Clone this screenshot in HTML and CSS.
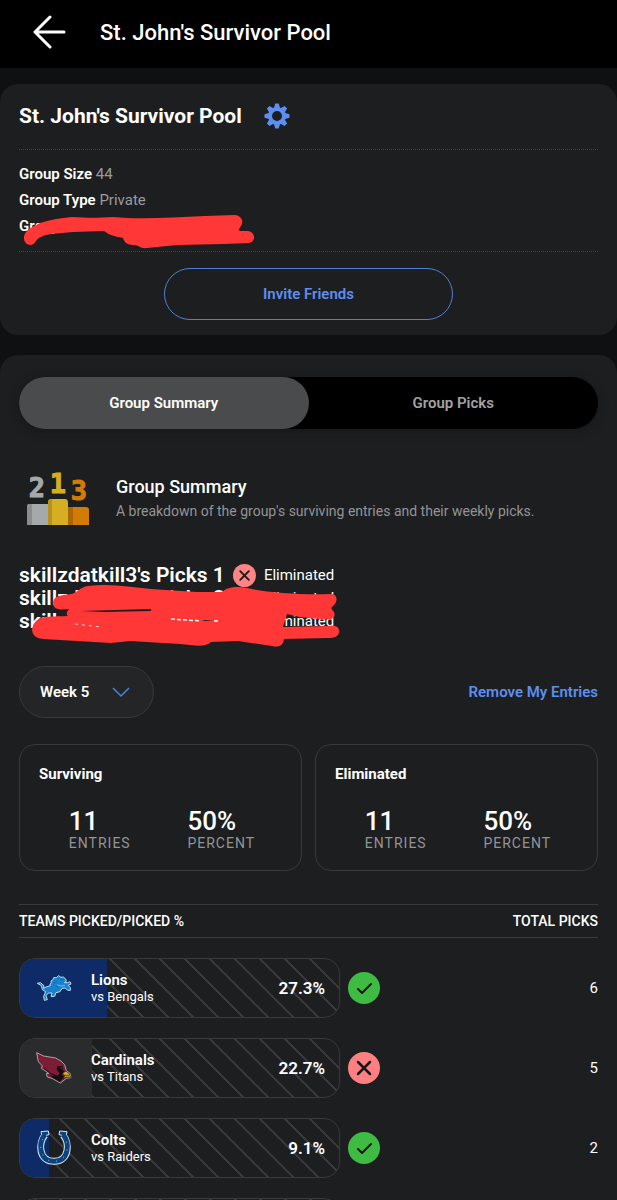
FILE: index.html
```
<!DOCTYPE html>
<html lang="en">
<head>
    <meta charset="UTF-8">
    <meta name="viewport" content="width=device-width, initial-scale=1.0">
    <title>St. John's Survivor Pool</title>
    <link rel="stylesheet" href="styles.css">
</head>
<body>
    <header class="topbar">
        <button class="back" aria-label="Back">
            <svg width="34" height="34" viewBox="0 0 34 34" fill="none" stroke="#fff" stroke-width="3" stroke-linecap="round" stroke-linejoin="round">
                <path d="M17 2 L2 17 L17 32 M2 17 H31"/>
            </svg>
        </button>
        <h1 class="topbar-title">St. John's Survivor Pool</h1>
    </header>

    <main class="content">
        <section class="card">
            <div class="group-head">
                <h2 class="group-name">St. John's Survivor Pool</h2>
                <button class="settings" aria-label="Settings">
                    <svg width="26" height="26" viewBox="-13 -13 26 26">
                        <circle r="7" fill="none" stroke="#5b8ff0" stroke-width="4"/>
                        <g fill="#5b8ff0">
                            <path id="tooth" d="M-3 -8 L-1.8 -12.5 H1.8 L3 -8 Z"/>
                            <use href="#tooth" transform="rotate(45)"/>
                            <use href="#tooth" transform="rotate(90)"/>
                            <use href="#tooth" transform="rotate(135)"/>
                            <use href="#tooth" transform="rotate(180)"/>
                            <use href="#tooth" transform="rotate(225)"/>
                            <use href="#tooth" transform="rotate(270)"/>
                            <use href="#tooth" transform="rotate(315)"/>
                        </g>
                    </svg>
                </button>
            </div>
            <div class="group-info">
                <p><strong>Group Size</strong> 44</p>
                <p><strong>Group Type</strong> Private</p>
                <p><strong>Group Password</strong></p>
                <svg class="scribble scribble-info" width="236" height="36" viewBox="20 213 236 36" fill="#ff3737">
                    <path d="M24 239 C23 231 32 227 40 223 C49 220 60 218 72 217 C88 218 98 218 113 217 C143 220 173 217 205 216 L234 215 C242 215 244 222 241 226 C239 229 238 230 240 231 L248 231 C256 232 256 242 249 243 L224 244 L177 245 L147 248 C140 249 140 245 133 245 C126 245 124 241 123 238 C114 236 109 235 104 231 L73 232 L51 234 C44 235 39 237 36 241 C33 247 25 246 24 239 Z"/>
                </svg>
            </div>
            <div class="invite-row">
                <button class="invite">Invite Friends</button>
            </div>
        </section>

        <section class="card card-summary">
            <div class="tabs" role="tablist">
                <button class="tab tab-active" role="tab" aria-selected="true">Group Summary</button>
                <button class="tab" role="tab" aria-selected="false">Group Picks</button>
            </div>

            <div class="summary">
                <svg width="62" height="62" viewBox="0 -4 62 62" class="podium">
                    <path d="M0 53 V34 Q0 32 3 32 H21 V53 Z" fill="#a6a9ac"/>
                    <path d="M0 53 V34 Q0 32 3 32 H5 V53 Z" fill="#8b8e91"/>
                    <path d="M41 53 V35 H59 Q62 35 62 38 V53 Z" fill="#d27b08"/>
                    <path d="M41 35 H46 V53 H41 Z" fill="#ae6509"/>
                    <path d="M21 53 V31 Q21 27 24 27 H38 Q41 27 41 31 V53 Z" fill="#d6ae22"/>
                    <path d="M21 53 V31 Q21 27 24 27 H25 V53 Z" fill="#b8921d"/>
                    <g class="podium-digits" text-anchor="middle">
                        <text x="10" y="25" fill="#a6a9ac" stroke="#a6a9ac">2</text>
                        <text x="31" y="21" fill="#d6ae22" stroke="#d6ae22">1</text>
                        <text x="52" y="28" fill="#d27b08" stroke="#d27b08">3</text>
                    </g>
                </svg>
                <div>
                    <h3 class="summary-title">Group Summary</h3>
                    <p class="summary-text">A breakdown of the group's surviving entries and their weekly picks.</p>
                </div>
            </div>

            <div class="entries">
                <p class="entry">
                    <strong>skillzdatkill3's Picks 1</strong>
                    <svg width="23" height="23" viewBox="0 0 32 32">
                        <circle cx="16" cy="16" r="16" fill="#ff8585"/>
                        <path d="M10 10 L22 22 M22 10 L10 22" stroke="#16171a" stroke-width="2.5" stroke-linecap="round"/>
                    </svg>
                    <span>Eliminated</span>
                </p>
                <p class="entry">
                    <strong>skillzdatkill3's Picks 2</strong>
                    <svg width="23" height="23" viewBox="0 0 32 32"></svg>
                    <span>Eliminated</span>
                </p>
                <p class="entry">
                    <strong>skillzdatkill3's Picks 3</strong>
                    <svg width="23" height="23" viewBox="0 0 32 32"></svg>
                    <span>Eliminated</span>
                </p>
                <svg class="scribble scribble-entries" width="312" height="66" viewBox="30 584 312 66">
                    <path fill="#ff3737" d="M53 604 C53 597 61 596 72 595 C78 593 80 588 88 587 C110 584 130 588 151 590 L196 593 L222 593 C228 587 240 587 252 590 C270 594 305 596 331 595 C338 595 338 603 333 607 C328 611 337 611 334 618 C331 622 325 620 318 620 L300 618 L287 615 L283 628 L329 627 C336 626 340 628 339 634 C337 639 332 639 327 639 L284 640 C283 646 280 649 272 647 L238 642 L211 643 C205 649 193 646 180 645 L130 642 L111 644 L43 640 C30 639 30 628 36 622 C42 616 54 618 68 617 C65 614 68 612 69 610 C61 611 53 611 53 604 Z"/>
                    <path fill="#1d1e20" d="M80 612 L151 610 L151 612 L105 613 Z M202 621 L214 621 L205 622 Z"/>
                    <path fill="none" stroke="#fff" stroke-width="1.5" stroke-dasharray="4 2" d="M171 620 L201 622 M214 622 H219"/>
                    <path fill="none" stroke="#ffd5d5" stroke-width="1" stroke-dasharray="3 4" d="M75 625 L101 628"/>
                </svg>
            </div>

            <div class="actions">
                <div class="week">
                    <select class="week-select" aria-label="Week">
                        <option>Week 5</option>
                    </select>
                    <svg class="week-arrow" width="18" height="12" viewBox="0 0 18 12" fill="none" stroke="#4f80e0" stroke-width="1.5">
                        <path d="M1 2 L9 10 L17 2"/>
                    </svg>
                </div>
                <a href="#" class="remove">Remove My Entries</a>
            </div>

            <div class="stats">
                <div class="stat">
                    <h4>Surviving</h4>
                    <dl>
                        <div><dd>11</dd><dt>ENTRIES</dt></div>
                        <div><dd>50%</dd><dt>PERCENT</dt></div>
                    </dl>
                </div>
                <div class="stat">
                    <h4>Eliminated</h4>
                    <dl>
                        <div><dd>11</dd><dt>ENTRIES</dt></div>
                        <div><dd>50%</dd><dt>PERCENT</dt></div>
                    </dl>
                </div>
            </div>

            <table class="picks">
                <thead>
                    <tr>
                        <th>TEAMS PICKED/PICKED %</th>
                        <th class="total">TOTAL PICKS</th>
                    </tr>
                </thead>
                <tbody>
                    <tr>
                        <td>
                            <div class="pick">
                                <div class="bar">
                                    <div class="fill fill-blue" style="width: 27.3%"></div>
                                    <svg class="logo" width="36" height="36" viewBox="78 62 108 108">
                                        <path fill="#1682cf" stroke="#c3dcee" stroke-width="3" stroke-linejoin="round" d="M82 102 L91 100 L102 109 L100 117 L111 112 L121 109 L120 104 L124 101 L123 95 L129 91 L131 85 L139 85 L146 79 L153 84 L160 83 L167 89 L169 96 L163 100 L173 100 L180 97 L183 104 L174 108 L181 115 L181 123 L173 123 L166 116 L156 117 L150 127 L138 130 L134 141 L123 142 L126 131 L115 131 L108 139 L112 151 L103 153 L101 141 L107 127 L97 121 L94 109 Z"/>
                                        <path fill="none" stroke="#a8d4f1" stroke-width="2" d="M142 106 L152 110 L165 108"/>
                                        <path fill="none" stroke="#1b5d9c" stroke-width="2" d="M150 89 L160 91 M139 111 L147 116 M130 100 L140 98"/>
                                    </svg>
                                    <div class="team"><b>Lions</b><span>vs Bengals</span></div>
                                    <span class="pct">27.3%</span>
                                </div>
                                <svg width="32" height="32" viewBox="0 0 32 32" role="img" aria-label="Won">
                                    <circle cx="16" cy="16" r="16" fill="#3fba43"/>
                                    <path d="M10 17 L14 21 L23 12" fill="none" stroke="#16171a" stroke-width="2" stroke-linecap="round" stroke-linejoin="round"/>
                                </svg>
                            </div>
                        </td>
                        <td class="total">6</td>
                    </tr>
                    <tr>
                        <td>
                            <div class="pick">
                                <div class="bar">
                                    <div class="fill fill-gray" style="width: 22.7%"></div>
                                    <svg class="logo" width="36" height="36" viewBox="78 62 108 108">
                                        <path fill="#7d1c36" stroke="#a9a6a8" stroke-width="3" stroke-linejoin="round" d="M80 70 L101 80 L137 86 L153 95 L164 106 L169 124 L180 132 L183 145 L169 147 L151 161 L128 148 L112 143 L109 133 L117 132 L94 117 L97 110 L85 97 Z"/>
                                        <path fill="none" stroke="#17090e" stroke-width="3" d="M101 117 L124 134 L149 143"/>
                                        <path fill="#101012" d="M142 111 L158 110 L158 122 L165 127 L155 136 L163 142 L149 158 L130 147 L120 139 L144 139 L149 131 L140 121 Z"/>
                                        <path fill="#7d1c36" d="M149 115 L157 113 L154 120 Z"/>
                                        <path fill="#d8a832" stroke="#3b2914" stroke-width="2" d="M158 132 L168 125 L178 133 L182 145 L169 143 L161 147 L164 139 Z"/>
                                        <path stroke="#3b2914" stroke-width="2" d="M162 138 L177 138"/>
                                    </svg>
                                    <div class="team"><b>Cardinals</b><span>vs Titans</span></div>
                                    <span class="pct">22.7%</span>
                                </div>
                                <svg width="32" height="32" viewBox="0 0 32 32" role="img" aria-label="Lost">
                                    <circle cx="16" cy="16" r="16" fill="#ff8080"/>
                                    <path d="M10 10 L22 22 M22 10 L10 22" stroke="#16171a" stroke-width="2.5" stroke-linecap="round"/>
                                </svg>
                            </div>
                        </td>
                        <td class="total">5</td>
                    </tr>
                    <tr>
                        <td>
                            <div class="pick">
                                <div class="bar">
                                    <div class="fill fill-blue" style="width: 9.1%"></div>
                                    <svg class="logo" width="36" height="36" viewBox="76 62 108 108">
                                        <g fill="none" stroke-linejoin="round">
                                            <path stroke="#dce8f1" stroke-width="21" d="M103 77 C82 101 84 156 130 156 C176 156 178 101 157 77"/>
                                            <path fill="#0b4380" stroke="#dce8f1" stroke-width="3" d="M91 67 L113 65 L115 76 L94 81 Z M147 65 L169 67 L166 81 L145 76 Z"/>
                                            <path stroke="#0b4380" stroke-width="15" d="M103 75 C82 101 84 156 130 156 C176 156 178 101 157 75"/>
                                            <path stroke="#b5cfe3" stroke-width="3" stroke-linecap="round" stroke-dasharray="0 24" d="M96 91 C82 114 94 156 130 156 C166 156 178 114 164 91"/>
                                        </g>
                                    </svg>
                                    <div class="team"><b>Colts</b><span>vs Raiders</span></div>
                                    <span class="pct">9.1%</span>
                                </div>
                                <svg width="32" height="32" viewBox="0 0 32 32" role="img" aria-label="Won">
                                    <circle cx="16" cy="16" r="16" fill="#3fba43"/>
                                    <path d="M10 17 L14 21 L23 12" fill="none" stroke="#16171a" stroke-width="2" stroke-linecap="round" stroke-linejoin="round"/>
                                </svg>
                            </div>
                        </td>
                        <td class="total">2</td>
                    </tr>
                    <tr>
                        <td><div class="pick"><div class="bar"></div><svg width="32" height="32"></svg></div></td>
                        <td></td>
                    </tr>
                </tbody>
            </table>
        </section>
    </main>
</body>
</html>
```
FILE: styles.css
```
* {
    box-sizing: border-box;
}
body {
    margin: 0;
    height: 100vh;
    overflow: hidden;
    font-family: Roboto, "Liberation Sans", sans-serif;
    font-size: 15px;
    color: #fff;
    background-color: #0f1012;
}
h1, h2, h3, h4, p, dl, dd {
    margin: 0;
}
button {
    font: inherit;
    color: inherit;
    background: none;
    border: none;
    padding: 0;
}
svg {
    display: block;
    flex-shrink: 0;
}
strong {
    font-weight: 600;
}
.topbar {
    display: flex;
    align-items: center;
    gap: 33px;
    height: 68px;
    padding: 0 33px 4px;
    background-color: #000;
}
.topbar-title {
    font-size: 22px;
    font-weight: 500;
}
.content {
    display: flex;
    flex-direction: column;
    gap: 20px;
    padding-top: 16px;
}
.card {
    padding: 0 19px 15px;
    background-color: #1d1e20;
    border-radius: 18px;
}
.group-head {
    display: flex;
    align-items: center;
    gap: 22px;
    height: 65px;
    padding-bottom: 2px;
}
.group-name {
    font-size: 21px;
    font-weight: 700;
}
.group-info {
    position: relative;
    padding: 11px 0 12px;
    line-height: 26px;
    color: #9a9b9d;
    border-top: 1px dotted #424345;
    border-bottom: 1px dotted #424345;
}
.group-info strong {
    color: #fff;
}
.scribble {
    position: absolute;
}
.scribble-info {
    left: 1px;
    bottom: 2px;
}
.invite-row {
    padding-top: 16px;
}
.invite {
    display: block;
    width: 50%;
    height: 52px;
    margin: 0 auto;
    font-weight: 600;
    color: #5b8ff0;
    border: 1px solid #4f7fd6;
    border-radius: 26px;
}
.card-summary {
    padding-top: 22px;
}
.tabs {
    display: flex;
    height: 52px;
    background-color: #000;
    border-radius: 26px;
    box-shadow: 0 2px 12px rgba(0, 0, 0, 0.25);
}
.tab {
    flex: 1;
    font-weight: 600;
    color: #a3a3a4;
    border-radius: 26px;
}
.tab-active {
    color: #fff;
    background-color: #4a4b4d;
}
.summary {
    display: flex;
    align-items: center;
    gap: 27px;
    padding: 39px 8px 0;
}
.podium-digits {
    font-family: "DejaVu Sans Mono", monospace;
    font-size: 27px;
    font-weight: 700;
    stroke-width: 1;
}
.summary-title {
    font-size: 18px;
    font-weight: 500;
    line-height: 24px;
}
.summary-text {
    font-size: 14px;
    line-height: 24px;
    color: #939496;
}
.entries {
    position: relative;
    padding: 34px 0 33px;
}
.entry {
    display: flex;
    align-items: center;
    gap: 8px;
    line-height: 23px;
}
.entry strong {
    font-size: 21px;
}
.scribble-entries {
    left: 11px;
    bottom: 17px;
}
.actions {
    display: flex;
    align-items: center;
    justify-content: space-between;
}
.week {
    position: relative;
}
.week-select {
    appearance: none;
    width: 135px;
    height: 52px;
    padding: 0 20px;
    font: inherit;
    font-weight: 600;
    color: #fff;
    background-color: #242527;
    border: 1px solid #38393b;
    border-radius: 26px;
}
.week-arrow {
    position: absolute;
    top: 20px;
    right: 24px;
    pointer-events: none;
}
.remove {
    font-weight: 600;
    color: #5b8ff0;
    text-decoration: none;
}
.stats {
    display: flex;
    gap: 13px;
    padding: 26px 0 33px;
}
.stat {
    flex: 1;
    padding: 19px;
    border: 1px solid #38393b;
    border-radius: 16px;
}
.stat h4 {
    font-size: 15px;
    font-weight: 700;
    line-height: 20px;
}
.stat dl {
    display: flex;
    padding-top: 23px;
}
.stat dl div {
    display: grid;
    flex: 1;
    justify-content: center;
}
.stat dd {
    font-size: 26px;
    font-weight: 500;
    line-height: 28px;
}
.stat dt {
    font-size: 14px;
    line-height: 16px;
    letter-spacing: 1px;
    color: #939496;
}
.picks {
    width: 100%;
    border-collapse: collapse;
    table-layout: fixed;
}
.picks th {
    height: 33px;
    padding: 0;
    font-size: 14px;
    font-weight: 500;
    text-align: left;
    border-top: 1px solid #38393b;
    border-bottom: 1px solid #38393b;
}
.picks td {
    padding: 20px 0 0;
}
.picks .total {
    width: 218px;
    text-align: right;
}
.pick {
    display: flex;
    align-items: center;
    gap: 8px;
}
.bar {
    position: relative;
    display: flex;
    align-items: center;
    flex: 1;
    height: 60px;
    padding: 0 14px 0 16px;
    overflow: hidden;
    border: 1px solid #38393b;
    border-radius: 16px;
    background-image: linear-gradient(45deg, #37383a 2%, transparent 4%, transparent 46%, #37383a 48%, #37383a 52%, transparent 54%, transparent 96%, #37383a 98%);
    background-size: 25px 25px;
    background-position: 15px 0;
}
/* share of picks, drawn under the team name */
.fill {
    position: absolute;
    top: 0;
    bottom: 0;
    left: 0;
}
.fill-blue {
    background-color: #0e2b68;
}
.fill-gray {
    background-color: #2a2b2d;
}
.logo, .team, .pct {
    position: relative;
}
.team {
    display: flex;
    flex-direction: column;
    flex: 1;
    margin-left: 19px;
}
.team b {
    font-weight: 600;
    line-height: 17px;
}
.team span {
    font-size: 13px;
    line-height: 16px;
}
.pct {
    font-size: 17px;
    font-weight: 600;
}
```
